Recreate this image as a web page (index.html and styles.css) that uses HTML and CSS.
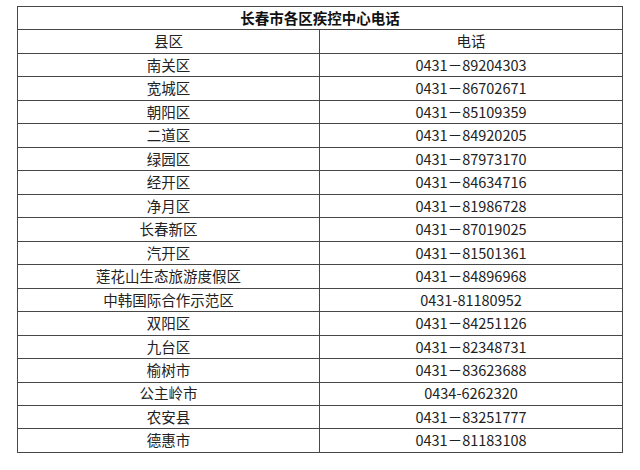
FILE: index.html
```html
<!DOCTYPE html>
<html lang="zh-CN">
<head>
<meta charset="utf-8">
<title>长春市各区疾控中心电话</title>
<link rel="stylesheet" href="styles.css">
</head>
<body>
<div class="table">
  <div class="cell title">长春市各区疾控中心电话</div>
  <div class="cell">县区</div><div class="cell">电话</div>
  <div class="cell">南关区</div><div class="cell">0431－89204303</div>
  <div class="cell">宽城区</div><div class="cell">0431－86702671</div>
  <div class="cell">朝阳区</div><div class="cell">0431－85109359</div>
  <div class="cell">二道区</div><div class="cell">0431－84920205</div>
  <div class="cell">绿园区</div><div class="cell">0431－87973170</div>
  <div class="cell">经开区</div><div class="cell">0431－84634716</div>
  <div class="cell">净月区</div><div class="cell">0431－81986728</div>
  <div class="cell">长春新区</div><div class="cell">0431－87019025</div>
  <div class="cell">汽开区</div><div class="cell">0431－81501361</div>
  <div class="cell">莲花山生态旅游度假区</div><div class="cell">0431－84896968</div>
  <div class="cell">中韩国际合作示范区</div><div class="cell">0431-81180952</div>
  <div class="cell">双阳区</div><div class="cell">0431－84251126</div>
  <div class="cell">九台区</div><div class="cell">0431－82348731</div>
  <div class="cell">榆树市</div><div class="cell">0431－83623688</div>
  <div class="cell">公主岭市</div><div class="cell">0434-6262320</div>
  <div class="cell">农安县</div><div class="cell">0431－83251777</div>
  <div class="cell">德惠市</div><div class="cell">0431－81183108</div>
</div>
</body>
</html>
```
FILE: styles.css
```css
html, body {
  margin: 0;
  background: #ffffff;
}
body {
  padding: 6px 0 0 17px;
  font-family: "Noto Sans CJK SC", "Noto Sans", sans-serif;
  font-size: 14.5px;
  color: #222222;
}
.table {
  display: grid;
  width: 606px;
  box-sizing: border-box;
  grid-template-columns: 302px 303px;
  grid-auto-rows: 23.47px;
  border-top: 1px solid #484848;
  border-left: 1px solid #484848;
}
.cell {
  box-sizing: border-box;
  border-right: 1px solid #484848;
  border-bottom: 1px solid #484848;
  display: flex;
  align-items: center;
  justify-content: center;
  line-height: 1;
  white-space: nowrap;
}
.title {
  grid-column: 1 / span 2;
  font-weight: bold;
  color: #111111;
}
```
